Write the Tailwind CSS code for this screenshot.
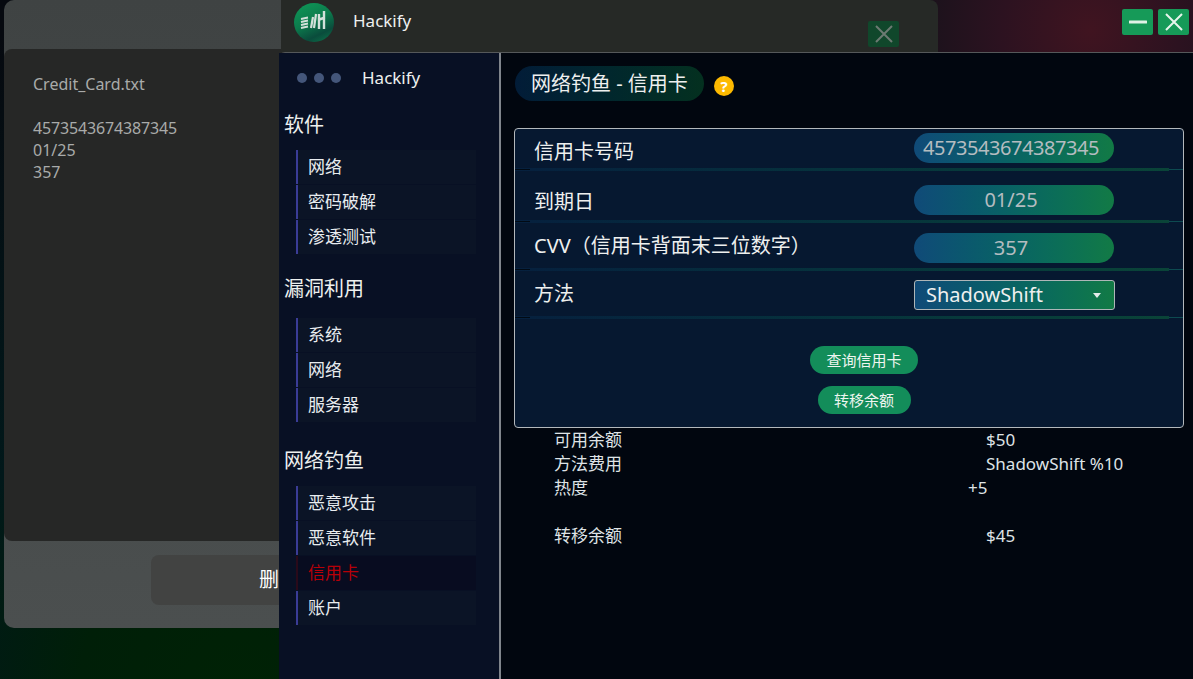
<!DOCTYPE html>
<html lang="zh">
<head>
  <meta charset="UTF-8" />
  <title>Hackify</title>
  <script src="https://cdn.jsdelivr.net/npm/@tailwindcss/browser@4"></script>
</head>
<body class="w-[1193px] h-[679px] overflow-hidden relative bg-[#06090f] font-['Noto_Sans','Noto_Sans_CJK_SC',sans-serif] text-[#e8ecef]">
  <!-- desktop wallpaper -->
  <div class="absolute inset-0 bg-[radial-gradient(circle_at_1090px_30px,#401420_0,#2c1220_90px,#0c1218_230px,transparent_300px),radial-gradient(circle_at_240px_690px,#002205_0,#001f08_160px,#01181a_320px,#06090f_700px)]"></div>

  <!-- notepad window -->
  <div class="absolute left-[4px] top-0 w-[400px] h-[628px] rounded-[10px] bg-gradient-to-b from-[#3f4343] to-[#4b4f4f]">
    <div class="mt-[49px] h-[492px] pt-[24px] pl-[29px] absolute top-0 inset-x-0 rounded-lg bg-[#262726] text-[16px] leading-[22px] text-[#a9abaa]">
      <p>Credit_Card.txt</p>
      <p class="mt-[22px] tracking-[-0.15px]">4573543674387345</p>
      <p>01/25</p>
      <p>357</p>
    </div>
    <div class="absolute left-[147px] top-[555px] w-[240px] h-[50px] rounded-lg bg-[#424342] flex items-center pl-[108px] text-[20px] text-white">删除</div>
  </div>

  <!-- app window behind -->
  <div class="absolute left-[281px] top-0 w-[657px] h-[52px] rounded-tr-lg bg-[#262926] flex items-start">
    <svg class="ml-[13px] mt-[3px]" width="40" height="39" viewBox="0 0 40 39">
      <defs>
        <linearGradient id="logo" x1="0.25" y1="0" x2="0.75" y2="1">
          <stop offset="0" stop-color="#0e9456" />
          <stop offset="0.45" stop-color="#0c7a4c" />
          <stop offset="0.8" stop-color="#0a4c3c" />
          <stop offset="1" stop-color="#0c6a46" />
        </linearGradient>
      </defs>
      <ellipse cx="20" cy="19.5" rx="20" ry="19.5" fill="url(#logo)" />
      <g stroke="#d2e0da" fill="none">
        <path d="M7 16l7-1.5M7 19l7-1.5M7 22l7-1.5M7 25l7-1.5" stroke-width="1.8" />
        <path d="M17 25l2-11M20 25l2-14" stroke-width="2.2" />
        <path d="M25 26V11M30 26V8M24 17l7-2.5" stroke-width="2.4" />
      </g>
    </svg>
    <span class="ml-[19px] mt-[9px] text-[17px] leading-[24px] text-[#eef0ef]">Hackify</span>
    <div class="ml-auto mr-[39px] mt-[21px] w-[31px] h-[26px] rounded-[2px] bg-[#10472b] flex items-center justify-center">
      <svg width="20" height="20" viewBox="0 0 20 20" stroke="#6c7a72" stroke-width="2" fill="none"><path d="M2 2l16 16M18 2L2 18" /></svg>
    </div>
  </div>

  <!-- window buttons -->
  <div class="absolute right-[4px] top-[9px] flex gap-[5px]">
    <button class="w-[31px] h-[26px] rounded-[2px] bg-[#169a58] flex items-center justify-center">
      <svg width="18" height="4" viewBox="0 0 18 4" fill="#dff2e6"><rect y="0.5" width="18" height="3" rx="0.5" /></svg>
    </button>
    <button class="w-[31px] h-[26px] rounded-[2px] bg-[#169a58] flex items-center justify-center">
      <svg width="18" height="18" viewBox="0 0 18 18" stroke="#e6f5ec" stroke-width="2" fill="none"><path d="M1 1l16 16M17 1L1 17" /></svg>
    </button>
  </div>

  <!-- main window -->
  <div class="absolute left-[279px] top-[52px] w-[914px] h-[627px] flex rounded-tl-md border-t border-[#55585a] bg-[#01060f]">
    <!-- sidebar -->
    <aside class="w-[220px] shrink-0 bg-[#081024] text-[17px]">
      <div class="h-[49px] flex items-center pl-[18px]">
        <span class="w-[10px] h-[10px] rounded-full bg-[#44567a]"></span>
        <span class="ml-[7px] w-[10px] h-[10px] rounded-full bg-[#44567a]"></span>
        <span class="ml-[7px] w-[10px] h-[10px] rounded-full bg-[#44567a]"></span>
        <span class="ml-[21px] text-[17px] text-[#eef0ef]">Hackify</span>
      </div>
      <h3 class="pl-[5px] text-[20px] leading-[28px] mt-[9px] text-[#eef0ef]">软件</h3>
      <ul class="mt-[11px] ml-[17px] w-[180px] flex flex-col gap-px">
        <li class="h-[34px] pl-[10px] flex items-center border-l-2 border-[#3a3c96] bg-[#0b1426]">网络</li>
        <li class="h-[34px] pl-[10px] flex items-center border-l-2 border-[#3a3c96] bg-[#0b1426]">密码破解</li>
        <li class="h-[34px] pl-[10px] flex items-center border-l-2 border-[#3a3c96] bg-[#0b1426]">渗透测试</li>
      </ul>
      <h3 class="pl-[5px] text-[20px] leading-[28px] mt-[21px] text-[#eef0ef]">漏洞利用</h3>
      <ul class="mt-[15px] ml-[17px] w-[180px] flex flex-col gap-px">
        <li class="h-[34px] pl-[10px] flex items-center border-l-2 border-[#3a3c96] bg-[#0b1426]">系统</li>
        <li class="h-[34px] pl-[10px] flex items-center border-l-2 border-[#3a3c96] bg-[#0b1426]">网络</li>
        <li class="h-[34px] pl-[10px] flex items-center border-l-2 border-[#3a3c96] bg-[#0b1426]">服务器</li>
      </ul>
      <h3 class="pl-[5px] text-[20px] leading-[28px] mt-[25px] text-[#eef0ef]">网络钓鱼</h3>
      <ul class="mt-[11px] ml-[17px] w-[180px] flex flex-col gap-px">
        <li class="h-[34px] pl-[10px] flex items-center border-l-2 border-[#3a3c96] bg-[#0b1426]">恶意攻击</li>
        <li class="h-[34px] pl-[10px] flex items-center border-l-2 border-[#3a3c96] bg-[#0b1426]">恶意软件</li>
        <li class="h-[34px] pl-[10px] flex items-center border-l-2 border-[#2a0a1a] bg-[#080c20] text-[#b80008]">信用卡</li>
        <li class="h-[34px] pl-[10px] flex items-center border-l-2 border-[#3a3c96] bg-[#0b1426]">账户</li>
      </ul>
    </aside>

    <!-- content -->
    <main class="flex-1 border-l-2 border-[#80858c] pl-[13px]">
      <div class="mt-[13px] ml-px flex items-start">
        <h2 class="h-[35px] w-[189px] pl-[16px] rounded-full bg-gradient-to-r from-[#021c38] to-[#04301f] text-[20px] leading-[36px] text-[#eef0ef]">网络钓鱼 - 信用卡</h2>
        <span class="ml-[10px] mt-[10px] w-[20px] h-[20px] rounded-full bg-[#fdb900] flex items-center justify-center text-[15px] font-bold text-white">?</span>
      </div>

      <section class="mt-[27px] w-[670px] h-[300px] rounded border border-[#b3b8bc] bg-[#061830] text-[20px] text-[#eef0ef]">
        <div class="h-[39px] flex items-start pl-[19px]">
          <span class="w-[380px] mt-[8px] leading-[30px]">信用卡号码</span>
          <div class="mt-[4px] w-[200px] h-[30px] pl-[9px] rounded-full bg-gradient-to-r from-[#104a78] to-[#127a45] leading-[30px] tracking-[-0.44px] text-[#b4bcc0]">4573543674387345</div>
        </div>
        <div class="relative h-[3px] w-[654px] bg-gradient-to-r from-[#06203e] to-[#0a4438]">
          <div class="absolute top-px left-0 w-[15px] h-px bg-[#010a14]"></div>
          <div class="absolute top-px left-[654px] w-[14px] h-px bg-[#0d4a50]"></div>
        </div>
        <div class="h-[49px] flex items-start pl-[19px]">
          <span class="w-[380px] mt-[16px] leading-[30px]">到期日</span>
          <div class="mt-[14px] w-[200px] h-[30px] pr-[6px] rounded-full bg-gradient-to-r from-[#104a78] to-[#127a45] leading-[30px] text-center text-[#b4bcc0]">01/25</div>
        </div>
        <div class="relative h-[3px] w-[654px] bg-gradient-to-r from-[#06203e] to-[#0a4438]">
          <div class="absolute top-px left-0 w-[15px] h-px bg-[#010a14]"></div>
          <div class="absolute top-px left-[654px] w-[14px] h-px bg-[#0d4a50]"></div>
        </div>
        <div class="h-[45px] flex items-start pl-[19px]">
          <span class="w-[380px] mt-[8px] leading-[30px]">CVV（信用卡背面末三位数字）</span>
          <div class="mt-[10px] w-[200px] h-[30px] pr-[6px] rounded-full bg-gradient-to-r from-[#104a78] to-[#127a45] leading-[30px] text-center text-[#b4bcc0]">357</div>
        </div>
        <div class="relative h-[3px] w-[654px] bg-gradient-to-r from-[#06203e] to-[#0a4438]">
          <div class="absolute top-px left-0 w-[15px] h-px bg-[#010a14]"></div>
          <div class="absolute top-px left-[654px] w-[14px] h-px bg-[#0d4a50]"></div>
        </div>
        <div class="h-[45px] flex items-start pl-[19px]">
          <span class="w-[380px] mt-[8px] leading-[30px]">方法</span>
          <div class="mt-[9px] w-[201px] h-[30px] pl-[11px] pr-[13px] rounded-[3px] border border-[#aeb6b8] bg-gradient-to-r from-[#104a78] to-[#127a45] flex items-center justify-between">
            <span>ShadowShift</span>
            <svg width="8" height="5" viewBox="0 0 8 5" fill="#e4ecea"><path d="M0 0h8L4 5z" /></svg>
          </div>
        </div>
        <div class="relative h-[3px] w-[654px] bg-gradient-to-r from-[#06203e] to-[#0a4438]">
          <div class="absolute top-px left-0 w-[15px] h-px bg-[#010a14]"></div>
          <div class="absolute top-px left-[654px] w-[14px] h-px bg-[#0d4a50]"></div>
        </div>
        <div class="mt-[27px] pl-[30px] flex flex-col items-center gap-[12px] text-[15px]">
          <button class="w-[108px] h-[28px] rounded-full bg-[#138d5a] text-[#eef5f0]">查询信用卡</button>
          <button class="w-[93px] h-[28px] rounded-full bg-[#138d5a] text-[#eef5f0]">转移余额</button>
        </div>
      </section>

      <div class="pl-[40px] text-[17px] leading-[24px] text-[#dfe3e6]">
        <div class="flex"><span class="w-[414px]">可用余额</span><span class="pl-[18px]">$50</span></div>
        <div class="flex"><span class="w-[414px]">方法费用</span><span class="pl-[18px]">ShadowShift %10</span></div>
        <div class="flex"><span class="w-[414px]">热度</span><span>+5</span></div>
        <div class="flex mt-[24px]"><span class="w-[414px]">转移余额</span><span class="pl-[18px]">$45</span></div>
      </div>
    </main>
  </div>
</body>
</html>
